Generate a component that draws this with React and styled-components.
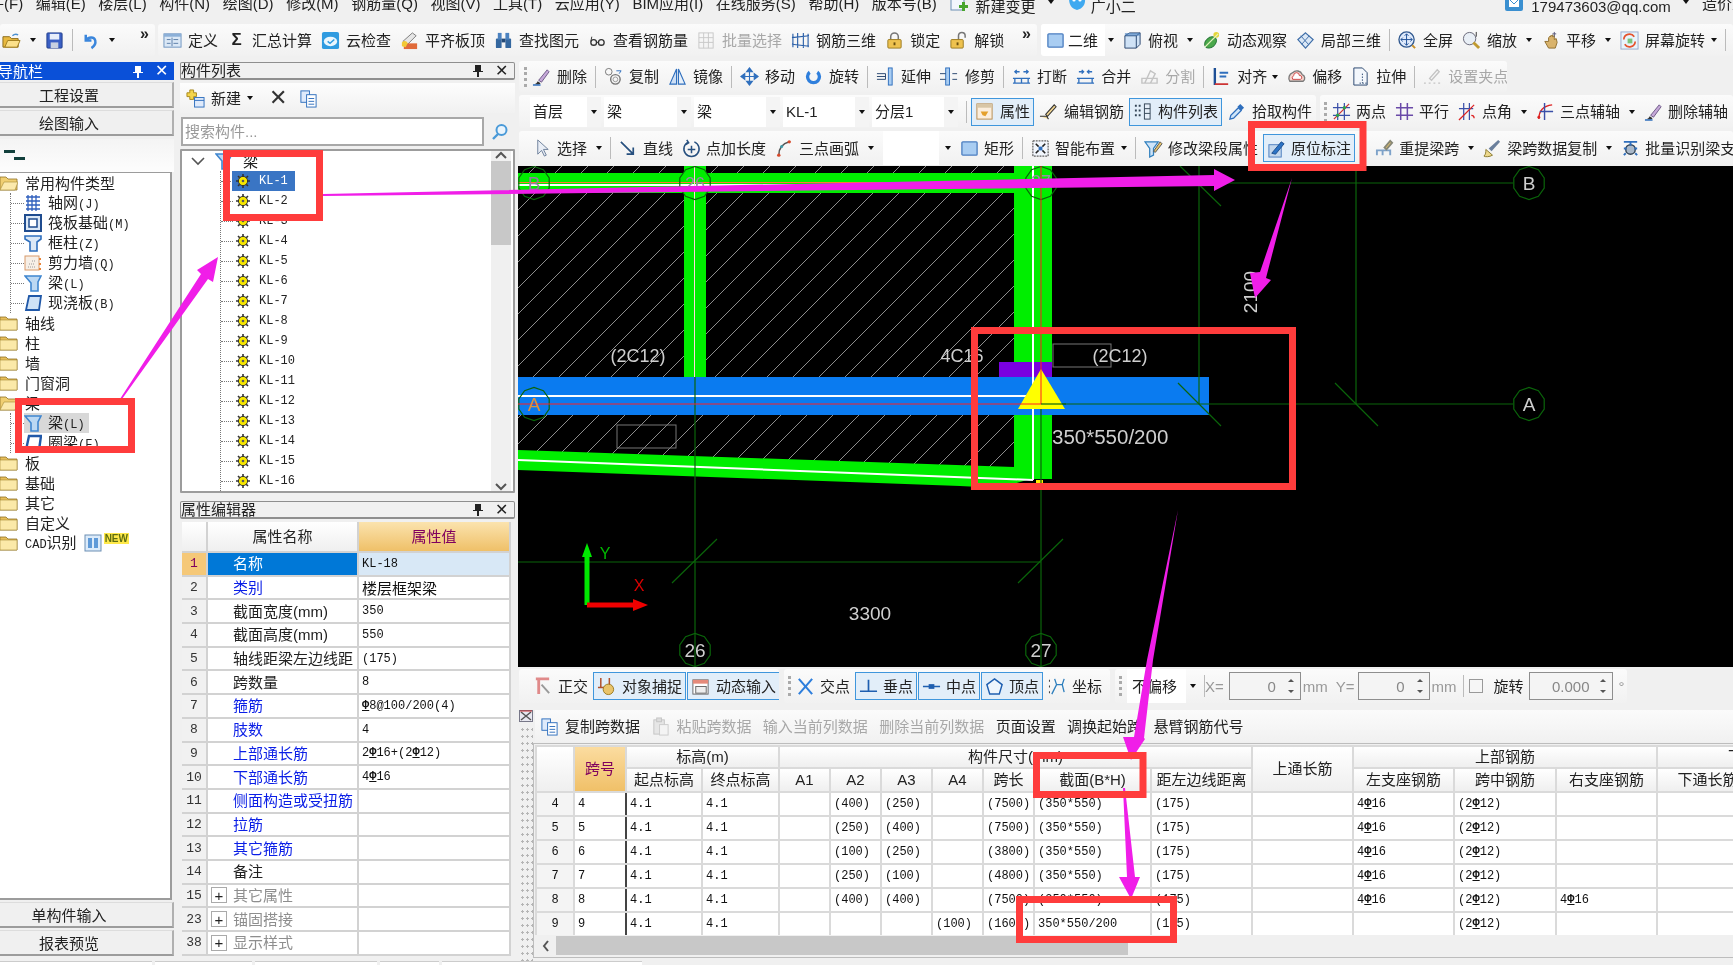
import React from 'react';
import styled, { createGlobalStyle } from 'styled-components';

const UI = `"Liberation Sans","Noto Sans CJK SC",sans-serif`;
const MONO = `"Liberation Mono","Noto Sans CJK SC",monospace`;

const Global = createGlobalStyle`
  html,body{margin:0;padding:0;width:1733px;height:965px;overflow:hidden;background:#f0f0f0;}
  *{box-sizing:border-box;}
`;

const Page = styled.div`
  position:relative;width:1733px;height:965px;overflow:hidden;background:#f0f0f0;
  font:15px/1 ${UI};color:#222;display:flex;flex-direction:column;filter:blur(.3px);
`;
const MenuBar = styled.div`height:22px;flex:none;display:flex;gap:12.6px;align-items:flex-start;margin-left:-26px;white-space:nowrap;`;
const MenuItem = styled.span`line-height:7px;display:inline-flex;align-items:center;gap:${p=>p.$gap||0}px;margin-left:${p=>p.$ml||0}px;`;
const MenuIcon = styled.svg`width:20px;height:20px;flex:none;margin-top:-8px;`;
const MainBar = styled.div`height:32px;flex:none;margin-top:2px;display:flex;`;
const Group = styled.div`
  display:flex;align-items:center;gap:9px;height:100%;white-space:nowrap;flex:${p=>p.$grow?'1':'none'};
  width:${p=>p.$w?p.$w+'px':'auto'};margin-left:${p=>p.$ml||0}px;padding-left:${p=>p.$pl||0}px;
  background:linear-gradient(#fbfbfb,#f1f1f1);border-radius:3px;--ig:${p=>p.$ig||6}px;overflow:hidden;
`;
const More = styled.span`align-self:flex-start;margin:2px 6px 0 auto;font:bold 16px/1 "Liberation Sans",sans-serif;`;
const Body = styled.div`height:900px;flex:none;margin-top:5px;display:flex;`;
const Footer = styled.div`flex:1;display:flex;gap:3px;`;
const FootTab = styled.div`width:${p=>p.$w}px;background:#fff;border-top:1px solid #ccc;`;

/* left navigation */
const Nav = styled.div`width:174px;flex:none;display:flex;flex-direction:column;margin-right:6px;padding-bottom:5px;`;
const TitleBlue = styled.div`
  height:18px;margin-top:1px;background:#0a50d8;color:#fff;display:flex;align-items:center;padding-left:0;font-size:15px;
  justify-content:space-between;overflow:hidden;
`;
const NavTitleText = styled.span`margin-left:-2px;`;
const TitleGray = styled.div`
  height:18px;margin-top:${p=>p.$mt||1}px;background:#f0f0f0;border:1px solid #8e8e8e;border-bottom-width:2px;border-radius:2px;
  display:flex;align-items:center;justify-content:space-between;
`;
const TitleBtns = styled.span`display:inline-flex;align-items:center;gap:12px;margin-right:6px;font-size:14px;`;
const NavBtn = styled.div`
  height:26px;margin-top:2px;flex:none;background:#f0f0f0;border-bottom:2px solid #9c9c9c;border-top:1px solid #ddd;border-right:2px solid #b0b0b0;
  display:flex;align-items:center;justify-content:center;padding:2px 34px 0 0;
`;
const NavHead = styled.div`height:33px;margin-top:3px;flex:none;padding:10px 0 0 4px;background:linear-gradient(#f4f4f4,#fdfdfd);`;
const NavTree = styled.div`
  flex:1;background:#fff;border:2px solid #9c9c9c;border-top-width:1px;border-left:none;width:172px;overflow:hidden;
`;
const FolderRow = styled.div`height:20px;display:flex;align-items:center;gap:7px;`;
const NavChildren = styled.div`margin-left:10px;border-left:1px dotted #777;height:${p=>p.$h}px;`;
const ChildRow = styled.div`height:20px;display:flex;align-items:center;`;
const Connector = styled.span`width:${p=>p.$w||13}px;flex:none;border-top:1px dotted #777;`;
const ChildBody = styled.span`display:inline-flex;align-items:center;gap:6px;height:20px;padding-right:4px;background:${p=>p.$sel?'#d8d8d8':'transparent'};`;
const Latin = styled.span`font:12px ${MONO};`;
const TreeIcon = styled.svg`width:18px;height:18px;flex:none;`;
const NewBadge = styled.span`font:bold 10px "Liberation Sans",sans-serif;background:#ffe94a;color:#5e6d10;margin:-10px 0 0 -5px;padding:0 1px;`;

/* middle column */
const Middle = styled.div`width:335px;flex:none;display:flex;flex-direction:column;margin-right:4px;`;
const ListBar = styled.div`height:30px;margin-top:3px;display:flex;align-items:center;gap:6px;padding-left:6px;background:linear-gradient(#fdfdfd,#f1f1f1);`;
const BigX = styled.span`font-size:22px;margin:0 6px 0 10px;color:#333;`;
const Search = styled.div`height:29px;margin-top:4px;display:flex;`;
const SearchInput = styled.div`
  width:303px;margin-left:1px;background:#fff;border:2px solid #a8a8a8;border-right-width:2px;color:#999;
  display:flex;align-items:center;padding-left:2px;font-size:15px;
`;
const SearchBtn = styled.div`flex:1;display:flex;align-items:center;justify-content:center;`;
const ListTree = styled.div`height:344px;margin-top:3px;background:#fff;border:2px solid #9c9c9c;display:flex;border-radius:1px;`;
const ListBody = styled.div`flex:1;overflow:hidden;`;
const ListRoot = styled.div`height:20px;display:flex;align-items:center;padding-left:9px;gap:10px;`;
const Chevron = styled.svg`width:14px;height:10px;flex:none;`;
const ListItems = styled.div`margin-left:38px;border-left:1px dotted #777;`;
const ListRow = styled.div`height:20px;display:flex;align-items:center;`;
const ListEntry = styled.span`
  display:inline-flex;align-items:center;height:20px;width:63px;padding-left:4px;gap:9px;margin-left:-1px;
  font:12px ${MONO};background:${p=>p.$sel?'#3a75c4':'transparent'};color:${p=>p.$sel?'#fff':'#222'};
`;
const GearIcon = styled.svg`width:14px;height:14px;flex:none;`;
const VScroll = styled.div`width:20px;margin-right:2px;background:#f0f0f0;display:flex;flex-direction:column;align-items:center;justify-content:space-between;`;
const VThumb = styled.div`width:100%;height:84px;background:#c8c8c8;margin-bottom:auto;`;
const PropTable = styled.div`margin:3px 0 0 2px;width:329px;display:flex;flex-direction:column;`;
const PropRow = styled.div`display:grid;grid-template-columns:26px 151px 1fr;height:${p=>p.$h||23.7}px;`;
const PropNum = styled.div`
  display:flex;align-items:center;justify-content:center;font:13px ${MONO};border:solid #d2d2d2;border-width:0 2px 2px 0;
  background:${p=>p.$on?'#f5c878':'#f1f1f1'};color:${p=>p.$on?'#80005e':'#333'};
`;
const PropName = styled.div`
  display:flex;align-items:center;padding-left:${p=>p.$exp?3:25}px;gap:6px;border:solid #d2d2d2;border-width:0 2px 2px 0;white-space:nowrap;
  background:${p=>p.$on?'#0078d7':'#fff'};
  color:${p=>p.$on?'#fff':p.$kind==='blue'?'#0a1ee6':p.$kind==='gray'?'#8e8e8e':'#222'};
`;
const PropVal = styled.div`
  display:flex;align-items:center;padding-left:3px;border:solid #d2d2d2;border-width:0 2px 2px 0;font:12px ${MONO};white-space:nowrap;color:#111;
  background:${p=>p.$on?'#d8e8f6':'#fff'};
`;
const CnVal = styled.span`font:15px ${UI};`;
const Plus = styled.span`width:16px;height:16px;border:1px solid #aaa;display:flex;align-items:center;justify-content:center;background:#fff;color:#222;font-size:15px;flex:none;`;
const HeadCell = styled.div`
  display:flex;align-items:center;justify-content:center;border:solid #d2d2d2;border-width:0 2px 2px 0;
  background:${p=>p.$hot?'linear-gradient(#fbe3ae,#efc068)':'linear-gradient(#fff,#efefef)'};color:${p=>p.$hot?'#80005e':'#222'};
`;

/* right column */
const Right = styled.div`flex:1;min-width:0;display:flex;flex-direction:column;`;
const ToolRow = styled.div`height:${p=>p.$h}px;margin-top:${p=>p.$mt||0}px;flex:none;display:flex;gap:${p=>p.$gap||0}px;`;
const Grip = styled.span`width:3px;height:20px;border-left:3px dotted #aaa;flex:none;margin-right:-4px;`;
const Sep = styled.span`width:1px;height:22px;background:#bbb;flex:none;margin:0 -1px;`;
const ToolItem = styled.span`
  display:inline-flex;align-items:center;flex:none;gap:var(--ig,6px);color:${p=>p.$off?'#a8a8a8':'#222'};
  ${p=>p.$on?`height:28px;padding:0 3px;margin:0 -4px;border:1px solid #3f96dc;background:#e2eef9;`:''}
`;
const IconBox = styled.svg`width:19px;height:19px;flex:none;`;
const Sigma = styled.span`width:19px;text-align:center;font:bold 17px "Liberation Sans",sans-serif;flex:none;`;
const Caret = styled.span`
  width:0;height:0;flex:none;border:3.5px solid transparent;border-top:4px solid #111;border-bottom:none;margin:0 ${p=>p.$m||0}px 0 ${p=>p.$l||0}px;
`;
const Selects = styled.div`display:flex;gap:3px;flex:none;`;
const Select = styled.div`
  width:${p=>p.$w}px;height:30px;background:#fff;display:flex;align-items:center;justify-content:space-between;padding-left:3px;font-size:15px;
`;
const SelectCap = styled.span`width:14px;height:100%;background:#f4f4f4;display:flex;align-items:center;justify-content:center;`;
const White = styled.div`background:#fff;height:100%;display:flex;align-items:center;padding-left:5px;width:${p=>p.$w}px;--ig:3px;flex:none;`;
const Canvas = styled.svg`display:block;flex:none;width:1215px;height:501px;margin:1px 0 0 -1px;background:#000;`;
const SnapBar = styled.div`height:41px;flex:none;padding:2px 0 5px;display:flex;gap:5px;`;
const Fields = styled.div`display:flex;align-items:center;flex:none;margin-left:-8px;`;
const Dim = styled.span`color:#999;font-size:15px;flex:none;margin-left:${p=>p.$ml||0}px;`;
const Spin = styled.div`
  width:${p=>p.$w}px;height:28px;border:1px solid #8e8e8e;background:#f4f4f4;flex:none;color:#888;display:flex;align-items:center;justify-content:flex-end;
  gap:${p=>p.$g}px;padding-right:6px;margin-left:${p=>p.$ml||0}px;
`;
const SpinArrows = styled.span`display:flex;flex-direction:column;gap:8px;`;
const SpinUp = styled.span`width:0;height:0;border:3px solid transparent;border-bottom:3px solid #555;border-top:none;`;
const SpinDn = styled.span`width:0;height:0;border:3px solid transparent;border-top:3px solid #555;border-bottom:none;`;
const FieldSep = styled.span`width:1px;height:22px;background:#bbb;flex:none;margin-left:6px;`;
const Check = styled.span`width:14px;height:14px;border:1px solid #999;background:#f6f6f6;flex:none;margin-left:5px;`;
const FieldLabel = styled.span`margin-left:11px;flex:none;`;
const Lower = styled.div`flex:1;display:flex;margin-top:2px;min-height:0;`;
const GripStrip = styled.div`width:14px;flex:none;display:flex;flex-direction:column;gap:4px;`;
const GripDots = styled.div`flex:1;background:radial-gradient(#b5b5b5 1px,transparent 1.2px) 1px 0/5px 7px;`;
const LowerMain = styled.div`flex:1;min-width:0;display:flex;flex-direction:column;`;
const DataBar = styled.div`height:32px;flex:none;margin-left:2px;display:flex;align-items:center;gap:11.4px;padding-left:5px;white-space:nowrap;background:linear-gradient(#fbfbfb,#f1f1f1);`;
const Frame = styled.div`height:215px;flex:none;margin-top:1px;border:1px solid #bdbdbd;border-right:none;padding:1px 0 0 1px;`;
const TableClip = styled.div`height:190px;overflow:hidden;background:#fff;`;
const Table = styled.table`
  table-layout:fixed;width:1323px;border-collapse:collapse;background:#fff;
`;
const Th = styled.th`
  font:400 15px/15px ${UI};color:${p=>p.$hot?'#80005e':'#222'};border:2px solid #dadada;padding:0 0 2px;text-align:center;overflow:hidden;white-space:nowrap;
  background:${p=>p.$hot?'linear-gradient(#fbdca0,#f0c068)':'linear-gradient(#fff,#efefef)'};
`;
const Td = styled.td`
  font:12px/14px ${MONO};color:#111;padding:0 0 0 ${p=>p.$num?0:3}px;border:2px solid #dadada;white-space:nowrap;overflow:hidden;
  text-align:${p=>p.$num?'center':'left'};background:${p=>p.$num?'#f4f4f4':'#fff'};
  ${p=>p.$dark?'border-right:2px solid #444;':''}
`;
const HeadRow = styled.tr`height:${p=>p.$h}px;`;
const BodyRow = styled.tr`height:24px;`;
const HScroll = styled.div`height:19px;margin-top:1px;display:flex;background:#f0f0f0;`;
const HArrow = styled.span`width:21px;display:flex;align-items:center;justify-content:center;`;
const HThumb = styled.span`width:572px;background:#c8c8c8;`;
const Rebar = styled.span`text-decoration:underline;font-weight:bold;`;
const Overlay = styled.svg`position:absolute;left:0;top:0;width:1733px;height:965px;pointer-events:none;`;
const MiniX = styled.span`font-size:16px;line-height:1;`;

const B='#2f6fbd', L='#a9cdf2', D='#27456e';
const Ic = {
  open:<><path d="M1 6h7l2 2h7v9H1z" fill="#e8b93f" stroke="#8a6a1a"/><path d="M3 17l3-7h13l-3 7z" fill="#fbe08a" stroke="#a07d20"/><path d="M11 5c2-2 4-2 6-1" stroke="#4a90d0" fill="none" strokeWidth="1.5"/></>,
  save:<><rect x="2" y="2" width="16" height="16" rx="1" fill="#3a5fc4" stroke="#24408c"/><rect x="5" y="3" width="10" height="6" fill="#e8eefa"/><rect x="6" y="12" width="8" height="6" fill="#c8d0e0"/></>,
  undo:<path d="M5 4v6h6M5.5 9.5C8 6 14 6 15 10c.7 3-1 6-4 8" fill="none" stroke="#3b86dc" strokeWidth="2.6"/>,
  define:<><rect x="1" y="3" width="18" height="14" fill="#dbe8f6" stroke="#6d93bf"/><rect x="1" y="3" width="18" height="3" fill="#8cb0d8"/><path d="M4 9h4M4 13h4M11 9h5M11 13h5M9.5 7v9" stroke="#5a7da8"/></>,
  cloud:<><rect x="1" y="1" width="18" height="18" rx="2" fill="#2f9be0"/><ellipse cx="10" cy="11" rx="7" ry="5" fill="#eaf6fd"/><path d="M7 11l2.5 2L14 9" fill="none" stroke="#2f9be0" strokeWidth="1.6"/></>,
  level:<><path d="M3 11l10-9 4 3-9 9z" fill="#e6e6e6" stroke="#7a7a7a"/><rect x="4" y="13" width="14" height="6" fill="#e06a3a"/><path d="M2 12c2-2 5-2 6 1l-2 4-4-1z" fill="#f2c935"/></>,
  binoc:<><rect x="2" y="8" width="6" height="10" rx="1" fill="#34679f"/><rect x="12" y="8" width="6" height="10" rx="1" fill="#34679f"/><rect x="4" y="2" width="4" height="7" fill="#4b82c0"/><rect x="12" y="2" width="4" height="7" fill="#4b82c0"/><rect x="8" y="8" width="4" height="4" fill="#244a78"/></>,
  glasses:<><circle cx="6" cy="12" r="3" fill="none" stroke="#333" strokeWidth="1.4"/><circle cx="14" cy="12" r="3" fill="none" stroke="#333" strokeWidth="1.4"/><path d="M9 12h2M3 11l1-5" stroke="#333"/></>,
  batch:<g stroke="#c8c8c8" fill="none"><rect x="2" y="2" width="15" height="16"/><path d="M2 7h15M2 12h15M7 2v16M12 2v16"/></g>,
  rebar3d:<g stroke="#2a5fa8" fill="none" strokeWidth="1.2"><path d="M2 3v14M7 2v16M13 2v16M18 3v14M1 7l18-2M1 14l18 2"/></g>,
  lock:<><path d="M6 9V6a4 4 0 018 0v3" fill="none" stroke="#777" strokeWidth="1.6"/><rect x="3" y="9" width="14" height="9" rx="1" fill="#eec24f" stroke="#9a7a22"/><rect x="9" y="12" width="2" height="3" fill="#6a5010"/></>,
  unlock:<><path d="M10 9V5a3.5 3.5 0 017 0v2" fill="none" stroke="#777" strokeWidth="1.6"/><rect x="2" y="9" width="13" height="9" rx="1" fill="#eec24f" stroke="#9a7a22"/><rect x="8" y="12" width="2" height="3" fill="#6a5010"/></>,
  square:<rect x="2" y="3" width="16" height="14" rx="1" fill={L} stroke="#4d7fc0" strokeWidth="1.4"/>,
  cube:<><path d="M2 5l5-3h11v12l-4 4H2z" fill="#cfe2f6" stroke={D}/><path d="M2 5h12v13M14 5l4-3" fill="none" stroke={D}/><path d="M2 2h16v3H2z" fill="#4b82c0" opacity=".6"/></>,
  orbit:<><ellipse cx="9" cy="12" rx="7" ry="5" transform="rotate(-40 9 12)" fill="#4aa84a" stroke="#2a7a3a"/><circle cx="15" cy="4" r="3" fill="#e5d63a"/><path d="M3 17L17 3" stroke="#e5f2c0" strokeWidth="1.4"/></>,
  local3d:<><path d="M10 2l8 7-8 9-8-9z" fill="#dbe8f6" stroke="#3f6ea8" strokeWidth="1.3"/><path d="M5 5l8 9M14 5l-8 9" stroke="#3f6ea8"/></>,
  full:<><circle cx="9" cy="9" r="8" fill="#dfeafb" stroke="#31598f" strokeWidth="1.4"/><path d="M9 3v12M3 9h12M9 3l-2 2m2-2l2 2M9 15l-2-2m2 2l2-2M3 9l2-2m-2 2l2 2M15 9l-2-2m2 2l-2 2" stroke="#1d4f96" fill="none"/><path d="M15 15l3 3" stroke="#c8902a" strokeWidth="2"/></>,
  zoom:<><circle cx="8" cy="8" r="6.5" fill="#e9eff6" stroke="#667"/><path d="M12 12l6 6" stroke="#c09a30" strokeWidth="3"/><path d="M15 1v5" stroke="#333"/></>,
  pan:<><path d="M4 11l4 7h7l2-6-1-4-2 1V5l-2 1V4l-2 2V5L8 7v4z" fill="#d9b36c" stroke="#8f6f2e"/><path d="M14 1v5M12 3h4" stroke="#557" /></>,
  rotate:<><rect x="1" y="1" width="18" height="18" fill="#e8f3fb" stroke="#9ac"/><path d="M4 9a6 6 0 0111-3" stroke="#e5532d" fill="none" strokeWidth="1.8"/><path d="M16 11a6 6 0 01-11 3" stroke="#e5532d" fill="none" strokeWidth="1.8"/><rect x="8" y="8" width="5" height="5" fill="#7cc47c"/></>,
  brush:<><path d="M1 18c3 0 4-1 5-3l3 2c-1 1-2 2-8 1z" fill="#333"/><path d="M7 14L16 3l2 2-8 11z" fill="#c5a8d8" stroke="#6d5a86"/><path d="M1 19h8" stroke="#2f6fbd" strokeWidth="1.5"/></>,
  rings:<><circle cx="5" cy="5" r="3.5" fill="none" stroke="#777"/><circle cx="12" cy="13" r="5" fill="none" stroke="#777" strokeWidth="1.5"/><circle cx="12" cy="13" r="2.5" fill="none" stroke="#999"/><path d="M13 4h5l-2 3" fill="none" stroke={B}/></>,
  mirror:<><path d="M9 2v16H2z" fill="#cfe0f5" stroke={B} strokeWidth="1.2"/><path d="M11 2v16h7z" fill="#e6eff9" stroke={B} strokeWidth="1.2"/></>,
  move:<path d="M10 1v18M1 10h18M10 1L7 5h6zM10 19l-3-4h6zM1 10l4-3v6zM19 10l-4-3v6z" fill={B} stroke={B} strokeWidth="1.2"/>,
  spin:<path d="M5 4a8 8 0 1010 0l-2 3a4.5 4.5 0 11-6 0z" fill="#2f7fdc"/>,
  extend:<><rect x="13" y="1" width="4" height="18" fill={L} stroke={B}/><path d="M1 10h9M1 7h9v6H1" stroke={D} fill="none"/></>,
  trim:<><rect x="6" y="1" width="4" height="18" fill={L} stroke={B}/><path d="M0 7h6M0 13h6M13 7h5M13 13h5" stroke={D}/></>,
  breakI:<g fill="none" stroke={B} strokeWidth="1.4"><path d="M1 12h18M1 17h18M3 12v5M17 12v5M10 12v5"/><path d="M3 5h5m4 0h5M5 3l-2 2 2 2M15 3l2 2-2 2"/></g>,
  merge:<g fill="none" stroke={B} strokeWidth="1.4"><path d="M1 12h18M1 17h18M3 12v5M17 12v5"/><path d="M3 5h5m4 0h5M6 3l2 2-2 2M14 3l-2 2 2 2"/></g>,
  split:<g fill="none" stroke="#c4c4c4" strokeWidth="1.5"><path d="M2 12h16v5H2zM5 17l6-13 5 3-5 10"/></g>,
  align:<><path d="M3 1v18" stroke="#1d4f96" strokeWidth="2.5"/><path d="M8 6h9M8 10h7" stroke={B} strokeWidth="2"/><path d="M3 18h14" stroke="#c33" strokeWidth="2"/></>,
  offset:<><path d="M3 15a6 6 0 013-9 6 6 0 0110 2 4 4 0 011 7z" fill="#f6d4cc" stroke="#7a7a7a" strokeWidth="1.4"/><path d="M6 13a3 3 0 011-4 3 3 0 016 0 2 2 0 011 4z" fill="#fff" stroke="#c44"/></>,
  stretch:<><path d="M3 1h9l5 5v13H3z" fill="#f3f7fc" stroke={D}/><path d="M12 7v10M9 17h8" stroke={D} strokeDasharray="1.5 1.5"/></>,
  grabPt:<g stroke="#c4c4c4" fill="none" strokeWidth="1.5"><path d="M7 12L15 3l2 2-8 9z"/><path d="M1 17h2M6 17h2M11 17h2M16 17h2"/></g>,
  attr:<><rect x="2" y="2" width="16" height="16" fill="#fbeedd" stroke="#b78b4f"/><rect x="2" y="2" width="16" height="4" fill="#d8c6a6"/><path d="M6 10l8 0-3 5-3-1z" fill="#e4a02c"/></>,
  editBar:<><path d="M1 15h7l2 3M7 13L16 3l2 2-9 10z" fill="#f2d591" stroke="#333" strokeWidth="1.1"/></>,
  listI:<g fill="none" stroke="#345"><path d="M2 4h2M2 9h2M2 14h2M6 4h3M6 9h3M6 14h3" strokeWidth="2" strokeDasharray="2 1"/><rect x="12" y="2" width="6" height="16" fill="#e6eff9"/><path d="M12 7h6M12 12h6"/></g>,
  pick:<><path d="M3 18l1-4 8-8 3 3-8 8z" fill="#cfe4f8" stroke={B} strokeWidth="1.3"/><path d="M11 5l3-3 4 4-3 3z" fill={B}/></>,
  two:<g strokeWidth="1.3"><path d="M6 1v18M13 1v18M1 6h18M1 14h18" stroke="#3a4fa8"/><path d="M2 18L18 2" stroke="#c33"/><circle cx="6" cy="14" r="1.8" fill="#2da04a"/><circle cx="13" cy="6" r="1.8" fill="#2da04a"/></g>,
  para:<path d="M6 1v18M13 1v18M1 6h18M1 14h18" stroke="#6a4aa8" strokeWidth="1.6" fill="none"/>,
  angle:<g strokeWidth="1.3" fill="none"><path d="M6 1v18M12 1v18M1 7h15" stroke="#3a4fa8"/><path d="M1 19L17 3" stroke="#d22"/><path d="M14 14a3 3 0 013 3" stroke="#d22"/></g>,
  arcAux:<g fill="none" strokeWidth="1.5"><path d="M3 18C3 9 8 4 17 3" stroke="#d22"/><path d="M9 1v18M4 10h14" stroke="#3a4fa8"/><circle cx="3" cy="16" r="1.5" fill="#d22" stroke="none"/></g>,
  select:<path d="M5 1v15l4-4 3 6 2-1-3-6h5z" fill="#e9eef6" stroke="#6d7f9a"/>,
  lineI:<path d="M2 3l13 13M15 9v7H8" fill="none" stroke="#27507f" strokeWidth="1.8"/>,
  ptLen:<g fill="none" stroke="#27507f" strokeWidth="1.6"><path d="M7 3a8 8 0 106 0M5 1l2 3-3 2"/><path d="M10 7v8M6 11h8"/></g>,
  arcI:<g fill="none" strokeWidth="1.6"><path d="M4 17C4 10 8 5 15 3" stroke="#555"/><circle cx="4" cy="17" r="1.8" fill="#d6492a" stroke="none"/><circle cx="15" cy="3" r="1.8" fill="#d6492a" stroke="none"/><circle cx="7" cy="8" r="1.6" fill="#3f9aa8" stroke="none"/></g>,
  smart:<><rect x="2" y="2" width="16" height="16" fill="#f2f6fc" stroke="#333" strokeDasharray="2 1"/><path d="M5 5l3 3M15 5l-3 3M5 15l3-3M15 15l-3-3" stroke="#222" strokeWidth="1.6"/><rect x="8" y="8" width="4" height="4" fill={B}/></>,
  funnel:<><path d="M1 3h14l-5 7v7l-4 2v-9z" fill="#cfe4f8" stroke="#2f7fbd" strokeWidth="1.3"/><path d="M10 13l7-10 2 2-7 9z" fill="#e9c46a" stroke="#555"/></>,
  inplace:<><rect x="2" y="6" width="13" height="13" fill="#c3d7ec" stroke="#4d7fc0"/><path d="M5 15L15 3l3 2-9 11z" fill="#2b73c5" stroke="#1c4f8e"/></>,
  reBeam:<g fill="none" stroke="#7ea2c9" strokeWidth="2"><path d="M2 17v-5h6v5M8 17v-5h8v5"/><path d="M10 9l6-7 2 2-6 7z" fill="#e9c46a" stroke="#887"/></g>,
  broom:<><path d="M3 11l7 6c-3 2-8 2-9 1 2-2 2-4 2-7z" fill="#eed98c" stroke="#8a7a30"/><path d="M6 10l3 3 9-10-2-2z" fill="#6a7f9c"/></>,
  batchId:<><circle cx="10" cy="11" r="5" fill="#aab8c8" stroke="#345" strokeWidth="1.5"/><path d="M3 3h14M10 3v4M3 17l2-2M17 17l-2-2M3 10h3M14 10h3" stroke={B} strokeWidth="2"/></>,
  ortho:<><path d="M3 2h14" stroke="#e08a8a" strokeWidth="3"/><path d="M6 2v16" stroke="#e08a8a" strokeWidth="3"/><path d="M9 8l8 9" stroke="#999" strokeWidth="2"/></>,
  obj:<><path d="M4 1v10M1 11h8M13 1v8" stroke="#b0522e" strokeWidth="1.6"/><circle cx="12" cy="13" r="5.5" fill="#e9c46a" stroke="#9c7a1f"/></>,
  dyn:<><rect x="2" y="3" width="16" height="15" fill="#fff" stroke="#666"/><rect x="2" y="3" width="16" height="4" fill="#e58a7a"/><rect x="5" y="10" width="11" height="7" fill="#eee" stroke="#666"/></>,
  crossI:<path d="M3 2l14 16M17 2L3 18" stroke="#2f7fdc" strokeWidth="2.2"/>,
  perp:<path d="M1 15h18M10 3v12" stroke="#1f5fb0" strokeWidth="1.8"/>,
  mid:<><path d="M1 10h18" stroke="#1f5fb0" strokeWidth="1.6"/><rect x="7" y="7.5" width="6" height="5" fill="#1f5fb0"/></>,
  apex:<path d="M10 2l8 6-3 10H5L2 8z" fill="#eef5fc" stroke="#1f5fb0" strokeWidth="1.6"/>,
  coord:<g fill="none" stroke="#2f7fbd" strokeWidth="1.4"><path d="M4 18L9 8h6M15 8l2 8M9 8L7 2M15 8l2-6"/><path d="M1 4h1M1 10h1M1 16h1" stroke="#333" strokeWidth="2"/></g>,
  copy:<><rect x="2" y="2" width="9" height="12" fill="#dfeafb" stroke={B}/><rect x="8" y="6" width="10" height="13" fill="#fff" stroke={B}/><path d="M10 10h6M10 13h6M10 16h6" stroke={B}/></>,
  paste:<><rect x="3" y="3" width="11" height="15" fill="#e6e6e6" stroke="#c4c4c4"/><rect x="6" y="1" width="5" height="4" fill="#ddd" stroke="#c4c4c4"/><rect x="9" y="8" width="9" height="11" fill="#f4f4f4" stroke="#ccc"/></>,
  add:<><path d="M4 1h4v3h3v4H8v3H4V8H1V4h3z" fill="#f5d54a" stroke="#a8881e"/><rect x="9" y="9" width="10" height="10" fill="#dfeafb" stroke={B}/><path d="M9 12h10" stroke={B}/></>,
};
const I = ({n}) => <IconBox viewBox="0 0 20 20">{Ic[n]}</IconBox>;
const Tool = ({n,label,on,off}) => (
  <ToolItem $on={on} $off={off}>{n==='sigma'?<Sigma>Σ</Sigma>:<I n={n}/>}<span>{label}</span></ToolItem>
);
const Gear = () => (
  <GearIcon viewBox="0 0 14 14">
    <g stroke="#333" strokeWidth="1.6"><path d="M7 0v14M0 7h14M2 2l10 10M12 2L2 12"/></g>
    <circle cx="7" cy="7" r="4.6" fill="#f6e600" stroke="#333"/><circle cx="7" cy="7" r="1.3" fill="#555"/>
  </GearIcon>
);
const Folder = ({open}) => (
  <TreeIcon viewBox="0 0 18 18">
    <path d="M0 3h6l2 2h9v11H0z" fill={open?'#f0cf72':'#e6bd5a'} stroke="#8f7226" strokeWidth=".8"/>
    <path d={open?'M0 16l4-8h14l-3 8z':'M0 6h17v10H0z'} fill={open?'#fbe9ac':'#fbe9a8'} stroke="#a58a34" strokeWidth=".6"/>
  </TreeIcon>
);
const NavIcons = {
  grid:<g stroke="#2f5fbd" strokeWidth="1.3"><path d="M2 3h14M2 7h14M2 11h14M2 15h14M4 1v16M8 1v16M12 1v16"/></g>,
  raft:<><rect x="1" y="1" width="16" height="16" fill="#dbe8f6" stroke="#1f4c8f" strokeWidth="2"/><rect x="5" y="5" width="8" height="8" fill="#fff" stroke="#1f4c8f" strokeWidth="1.5"/></>,
  col:<path d="M1 2h16v3l-4 3v9H6V8L1 5z" fill="#dbe8f6" stroke="#2f6fbd" strokeWidth="1.6"/>,
  wall:<><rect x="1" y="2" width="14" height="14" fill="#f7efe6" stroke="#d89a6a"/><path d="M4 13h8M5 10h5M8 7h3" stroke="#999" strokeDasharray="1 1"/><path d="M16 4v2M16 9v2M16 14v2" stroke="#e8853a" strokeWidth="2"/></>,
  beam:<path d="M1 2h16l-3 6v9H7V9z" fill="#bcd8f3" stroke="#3f86d0" strokeWidth="1.6"/>,
  slab:<path d="M5 2h12l-2 14H2z" fill="#cfe2f6" stroke="#2058a8" strokeWidth="1.8"/>,
  ring:<path d="M5 2h12l-2 14H2z" fill="#fff" stroke="#2058a8" strokeWidth="2.4"/>,
  cad:<><rect x="1" y="1" width="16" height="16" fill="#dcebfa" stroke="#6d8fb4"/><rect x="4" y="4" width="4" height="10" fill="#5f9ad8"/><rect x="10" y="4" width="4" height="10" fill="#5f9ad8"/></>,
};
const NI = ({n}) => <TreeIcon viewBox="0 0 18 18">{NavIcons[n]}</TreeIcon>;
const Child = ({n,text,lat,sel}) => (
  <ChildRow><Connector/><ChildBody $sel={sel}><NI n={n}/><span>{text}{lat&&<Latin>{lat}</Latin>}</span></ChildBody></ChildRow>
);
const Pin = ({c='#222'}) => <svg width="10" height="13" viewBox="0 0 10 13"><path d="M2 1h6v6h2v1H6v5H4V8H0V7h2z" fill={c}/></svg>;

const rebar = s => s.split('Φ').flatMap((p,i)=> i? [<Rebar key={i}>Φ</Rebar>,p]:[p]);

const propRows = [
  ['1','名称','KL-18','',true],['2','类别','楼层框架梁','blue',false,true],['3','截面宽度(mm)','350'],['4','截面高度(mm)','550'],
  ['5','轴线距梁左边线距','(175)'],['6','跨数量','8'],['7','箍筋','Φ8@100/200(4)','blue'],['8','肢数','4','blue'],
  ['9','上部通长筋','2Φ16+(2Φ12)','blue'],['10','下部通长筋','4Φ16','blue'],['11','侧面构造或受扭筋','','blue'],['12','拉筋','','blue'],
  ['13','其它箍筋','','blue'],['14','备注',''],['15','其它属性','','gray'],['23','锚固搭接','','gray'],['38','显示样式','','gray'],
];
const colW=[38,52,76,77,51,51,51,51,51,117,101,101,101,102,101,101,101];
const spanRows=[
  ['4','4','4.1','4.1','','(400)','(250)','','(7500)','(350*550)','(175)','','4Φ16','(2Φ12)','','',''],
  ['5','5','4.1','4.1','','(250)','(400)','','(7500)','(350*550)','(175)','','4Φ16','(2Φ12)','','',''],
  ['6','6','4.1','4.1','','(100)','(250)','','(3800)','(350*550)','(175)','','4Φ16','(2Φ12)','','',''],
  ['7','7','4.1','4.1','','(250)','(100)','','(4800)','(350*550)','(175)','','4Φ16','(2Φ12)','','',''],
  ['8','8','4.1','4.1','','(400)','(400)','','(7500)','(350*550)','(175)','','4Φ16','(2Φ12)','4Φ16','',''],
  ['9','9','4.1','4.1','','','','(100)','(1600)','350*550/200','(175)','','','(2Φ12)','','',''],
];

const ring=(cx,cy,rx=16,ry=16.5)=>Array.from({length:10},(_,i)=>{const a=i*Math.PI/5+Math.PI/10;return `${(cx+rx*Math.cos(a)).toFixed(1)},${(cy+ry*Math.sin(a)).toFixed(1)}`}).join(' ');
const AXIS='#0a640a';
const CadLabel=styled.text`font-family:"Liberation Sans",sans-serif;fill:${p=>p.$c||'#cfcfcf'};`;

const CadCanvas=()=>(
  <Canvas viewBox="518 166 1215 501">
    <defs>
      <pattern id="hatch" patternUnits="userSpaceOnUse" width="26" height="26">
        <path d="M-2 28L28 -2M-2 2L2 -2M24 28L28 24" stroke="#8c8c8c" strokeWidth="1"/>
      </pattern>
    </defs>
    <rect x="518" y="166" width="1215" height="501" fill="#000"/>
    <polygon points="518,166 1015,166 1015,470 518,455" fill="url(#hatch)"/>
    <rect x="518" y="173" width="497" height="20" fill="#00ee00"/>
    <rect x="684" y="166" width="22" height="212" fill="#00ee00"/>
    <rect x="1014" y="166" width="38" height="313" fill="#00ee00"/>
    <polygon points="518,450 1014,467 1052,467 1052,479 1030,479 1000,488 960,486 518,470" fill="#00ee00"/>
    <rect x="999" y="362" width="53" height="16" fill="#7a00e0"/>
    <rect x="518" y="377" width="691" height="38" fill="#0a7bf0"/>
    <polyline points="518,460 1033,480" fill="none" stroke="#fff" strokeWidth="2"/>
    <rect x="518" y="184" width="300" height="2" fill="#fff"/>
    <rect x="518" y="182" width="523" height="1" fill="#ff7a30"/>
    <rect x="1032" y="166" width="2" height="314" fill="#fff"/>
    <rect x="694" y="166" width="1" height="211" fill="#ffd8d8"/>
    <rect x="518" y="395" width="522" height="2" fill="#fff"/>
    <rect x="1036" y="480" width="7" height="3" fill="#ffee00"/>
    <g stroke={AXIS} strokeWidth="1.2" fill="none">
      <path d="M695 377V667M1041 404V667M1199 166V404M1356 166V404"/>
      <path d="M1049 404H1513M1199 183H1513M518 562H1041"/>
      <path d="M1178 383L1221 426M1335 383L1378 426M1180 166L1221 206M672 583L717 539M1018 583L1063 539"/>
      <polygon points={ring(534,183)}/><polygon points={ring(534,404)}/><polygon points={ring(695,183)}/><polygon points={ring(1041,183)}/>
      <polygon points={ring(1529,183)}/><polygon points={ring(1529,404)}/><polygon points={ring(695,650)}/><polygon points={ring(1041,650)}/>
    </g>
    <polygon points="1041,369 1018,409 1065,409" fill="#ffff00"/>
    <path d="M1041 166V404" stroke="#ff2020" strokeWidth="1"/>
    <path d="M518 404H1041" stroke="#ff2020" strokeWidth="1"/>
    <path d="M1041 404H1066" stroke={AXIS} strokeWidth="1.2"/>
    <rect x="617" y="425" width="59" height="23" fill="none" stroke="#777"/>
    <rect x="1053" y="344" width="58" height="23" fill="none" stroke="#777"/>
    <CadLabel x="638" y="362" fontSize="18" textAnchor="middle">(2C12)</CadLabel>
    <CadLabel x="962" y="362" fontSize="18" textAnchor="middle">4C16</CadLabel>
    <CadLabel x="1120" y="362" fontSize="18" textAnchor="middle">(2C12)</CadLabel>
    <CadLabel x="1052" y="444" fontSize="20.5">350*550/200</CadLabel>
    <CadLabel x="870" y="620" fontSize="19" textAnchor="middle">3300</CadLabel>
    <CadLabel x="1257" y="292" fontSize="19" textAnchor="middle" transform="rotate(-90 1257 292)">2100</CadLabel>
    <CadLabel x="534" y="190" fontSize="19" textAnchor="middle" $c="#8f7fa0">B</CadLabel>
    <CadLabel x="534" y="411" fontSize="19" textAnchor="middle" $c="#e0913a">A</CadLabel>
    <CadLabel x="695" y="190" fontSize="18" textAnchor="middle" $c="#9a8aa8">26</CadLabel>
    <CadLabel x="1041" y="188" fontSize="18" textAnchor="middle" $c="#9a8aa8">27</CadLabel>
    <CadLabel x="1529" y="190" fontSize="19" textAnchor="middle">B</CadLabel>
    <CadLabel x="1529" y="411" fontSize="19" textAnchor="middle">A</CadLabel>
    <CadLabel x="695" y="657" fontSize="19" textAnchor="middle">26</CadLabel>
    <CadLabel x="1041" y="657" fontSize="19" textAnchor="middle">27</CadLabel>
    <path d="M587 605V553" stroke="#00e800" strokeWidth="5"/><polygon points="587,543 582,557 592,557" fill="#00e800"/>
    <path d="M587 605H636" stroke="#f00000" strokeWidth="5"/><polygon points="648,605 633,599 633,611" fill="#f00000"/>
    <CadLabel x="605" y="559" fontSize="16" textAnchor="middle" $c="#00b800">Y</CadLabel>
    <CadLabel x="639" y="591" fontSize="16" textAnchor="middle" $c="#d80000">X</CadLabel>
  </Canvas>
);

const Annotations=()=>(
  <Overlay viewBox="0 0 1733 965">
    <g fill="#f01ee8">
      <polygon points="323,194 1214,175 1214,169 1235,180 1214,191 1214,186 323,196"/>
      <polygon points="120,399 201,274 197,270 218,257 213,282 208,279 122,399"/>
      <polygon points="1292,178 1260,272 1250,273 1255,298 1271,280 1266,278"/>
      <polygon points="1178,510 1147,660 1134,737 1123,737 1131,760 1145,739 1144,738 1153,660"/>
      <polygon points="1123,788 1127,877 1119,877 1131,899 1140,877 1135,877 1125,788"/>
    </g>
    <g fill="none" stroke="#ff3c3c" strokeWidth="7">
      <rect x="226.5" y="153.5" width="93" height="64"/>
      <rect x="18.5" y="401.5" width="113" height="48"/>
      <rect x="1251.5" y="124.5" width="111.5" height="43"/>
      <rect x="974.5" y="330.5" width="318" height="156"/>
      <rect x="1036.5" y="755.5" width="106.5" height="39"/>
      <rect x="1019.5" y="899.5" width="154" height="40"/>
    </g>
  </Overlay>
);

export default function App(){
  return (
    <Page>
      <Global/>
      <MenuBar>
        {['文件(F)','编辑(E)','楼层(L)','构件(N)','绘图(D)','修改(M)','钢筋量(Q)','视图(V)','工具(T)','云应用(Y)','BIM应用(I)','在线服务(S)','帮助(H)','版本号(B)'].map(t=><MenuItem key={t}>{t}</MenuItem>)}
        <MenuItem $gap={6}>
          <MenuIcon viewBox="0 0 20 20"><rect x="2" y="1" width="13" height="17" fill="#f2f6fc" stroke="#6d8fb4"/><path d="M13 10h3v3h3v3h-3v3h-3v-3h-3v-3h3z" fill="#49a52e"/></MenuIcon>
          新建变更
        </MenuItem>
        <MenuItem><Caret/></MenuItem>
        <MenuItem $gap={4}>
          <MenuIcon viewBox="0 0 20 20"><path d="M3 2c3 3 11 3 14 0 2 6 2 14-7 16C2 16 1 8 3 2z" fill="#3fa9f0"/><circle cx="7" cy="8" r="1.6" fill="#fff"/><circle cx="13" cy="8" r="1.6" fill="#fff"/></MenuIcon>
          广小二
        </MenuItem>
        <MenuItem $ml={356} $gap={7}>
          <MenuIcon viewBox="0 0 20 20"><rect x="1" y="1" width="18" height="18" rx="2" fill="#3a8fd0"/><path d="M5 7h10v8H5z" fill="#fff"/><path d="M5 7l5 5 5-5" fill="none" stroke="#3a8fd0"/></MenuIcon>
          179473603@qq.com
        </MenuItem>
        <MenuItem><Caret/></MenuItem>
        <MenuItem>造价豆</MenuItem>
      </MenuBar>

      <MainBar>
        <Group $w={155} $pl={2}>
          <I n="open"/><Caret/><I n="save"/><Sep/><I n="undo"/><Caret/><More>»</More>
        </Group>
        <Group $w={879} $ml={3} $pl={5}>
          <Tool n="define" label="定义"/><Tool n="sigma" label="汇总计算"/><Tool n="cloud" label="云检查"/><Tool n="level" label="平齐板顶"/>
          <Tool n="binoc" label="查找图元"/><Tool n="glasses" label="查看钢筋量"/><Tool n="batch" label="批量选择" off/><Tool n="rebar3d" label="钢筋三维"/>
          <Tool n="lock" label="锁定"/><Tool n="unlock" label="解锁"/><More>»</More>
        </Group>
        <Group $grow $ml={4}>
          <White $w={64}><Tool n="square" label="二维"/></White><Caret $l={-6}/>
          <Tool n="cube" label="俯视"/><Caret/><Tool n="orbit" label="动态观察"/><Tool n="local3d" label="局部三维"/><Sep/>
          <Tool n="full" label="全屏"/><Tool n="zoom" label="缩放"/><Caret/><Tool n="pan" label="平移"/><Caret/><Tool n="rotate" label="屏幕旋转"/><Caret $l={-3}/><Sep/>
        </Group>
      </MainBar>

      <Body>
        <Nav>
          <TitleBlue><NavTitleText>导航栏</NavTitleText><TitleBtns><Pin c="#fff"/><MiniX>✕</MiniX></TitleBtns></TitleBlue>
          <NavBtn>工程设置</NavBtn>
          <NavBtn>绘图输入</NavBtn>
          <NavHead><svg width="22" height="12" viewBox="0 0 22 12"><rect width="11" height="3" fill="#12403c"/><rect x="10" y="7" width="11" height="3" fill="#12403c"/></svg></NavHead>
          <NavTree>
            <FolderRow><Folder open/><span>常用构件类型</span></FolderRow>
            <NavChildren $h={120}>
              <Child n="grid" text="轴网" lat="(J)"/><Child n="raft" text="筏板基础" lat="(M)"/><Child n="col" text="框柱" lat="(Z)"/>
              <Child n="wall" text="剪力墙" lat="(Q)"/><Child n="beam" text="梁" lat="(L)"/><Child n="slab" text="现浇板" lat="(B)"/>
            </NavChildren>
            {['轴线','柱','墙','门窗洞'].map(t=><FolderRow key={t}><Folder/><span>{t}</span></FolderRow>)}
            <FolderRow><Folder open/><span>梁</span></FolderRow>
            <NavChildren $h={40}>
              <Child n="beam" text="梁" lat="(L)" sel/><Child n="ring" text="圈梁" lat="(F)"/>
            </NavChildren>
            {['板','基础','其它','自定义'].map(t=><FolderRow key={t}><Folder/><span>{t}</span></FolderRow>)}
            <FolderRow><Folder/><span><Latin>CAD</Latin>识别</span><NI n="cad"/><NewBadge>NEW</NewBadge></FolderRow>
          </NavTree>
          <NavBtn>单构件输入</NavBtn>
          <NavBtn>报表预览</NavBtn>
        </Nav>

        <Middle>
          <TitleGray>构件列表<TitleBtns><Pin/><MiniX>✕</MiniX></TitleBtns></TitleGray>
          <ListBar><I n="add"/><span>新建</span><Caret/><BigX>✕</BigX><I n="copy"/></ListBar>
          <Search>
            <SearchInput>搜索构件...</SearchInput>
            <SearchBtn><svg width="18" height="18" viewBox="0 0 18 18"><circle cx="10.5" cy="7" r="5" fill="#eaf4fc" stroke="#4a9ad8" strokeWidth="2"/><path d="M7 11l-5 5" stroke="#4a9ad8" strokeWidth="2.4"/></svg></SearchBtn>
          </Search>
          <ListTree>
            <ListBody>
              <ListRoot>
                <Chevron viewBox="0 0 14 10"><path d="M1 2l6 6 6-6" fill="none" stroke="#555" strokeWidth="1.6"/></Chevron>
                <NI n="beam"/><span>梁</span>
              </ListRoot>
              <ListItems>
                {Array.from({length:16},(_,i)=>(
                  <ListRow key={i}><Connector $w={12}/><ListEntry $sel={i===0}><Gear/><span>KL-{i+1}</span></ListEntry></ListRow>
                ))}
              </ListItems>
            </ListBody>
            <VScroll>
              <Chevron viewBox="0 0 14 10"><path d="M2 7l5-5 5 5" fill="none" stroke="#555" strokeWidth="2"/></Chevron>
              <VThumb/>
              <Chevron viewBox="0 0 14 10"><path d="M2 3l5 5 5-5" fill="none" stroke="#555" strokeWidth="2"/></Chevron>
            </VScroll>
          </ListTree>
          <TitleGray $mt={8}>属性编辑器<TitleBtns><Pin/><MiniX>✕</MiniX></TitleBtns></TitleGray>
          <PropTable>
            <PropRow $h={31}><HeadCell/><HeadCell>属性名称</HeadCell><HeadCell $hot>属性值</HeadCell></PropRow>
            {propRows.map(([num,name,val,kind,on,cn])=>(
              <PropRow key={num}>
                <PropNum $on={on}>{num}</PropNum>
                <PropName $on={on} $kind={kind} $exp={kind==='gray'}>{kind==='gray'&&<Plus>+</Plus>}{name}</PropName>
                <PropVal $on={on}>{cn?<CnVal>{val}</CnVal>:rebar(val)}</PropVal>
              </PropRow>
            ))}
          </PropTable>
        </Middle>

        <Right>
          <ToolRow $h={31}>
            <Group $w={988} $pl={5}>
              <Grip/><Tool n="brush" label="删除"/><Sep/><Tool n="rings" label="复制"/><Tool n="mirror" label="镜像"/><Sep/><Tool n="move" label="移动"/><Tool n="spin" label="旋转"/><Sep/>
              <Tool n="extend" label="延伸"/><Tool n="trim" label="修剪"/><Sep/><Tool n="breakI" label="打断"/><Tool n="merge" label="合并"/><Tool n="split" label="分割" off/><Sep/>
              <Tool n="align" label="对齐"/><Caret $l={-4}/><Tool n="offset" label="偏移"/><Tool n="stretch" label="拉伸"/><Sep/><Tool n="grabPt" label="设置夹点" off/>
            </Group>
          </ToolRow>
          <ToolRow $h={33} $mt={3}>
            <Group $w={797} $pl={11}>
              <Selects>
                {[['首层',71],['梁',87],['梁',86],['KL-1',86],['分层1',86]].map(([t,w],i)=>(
                  <Select key={i} $w={w}><span>{t}</span><SelectCap><Caret/></SelectCap></Select>
                ))}
              </Selects>
              <Sep/>
              <Tool n="attr" label="属性" on/><Tool n="editBar" label="编辑钢筋"/><Tool n="listI" label="构件列表" on/><Tool n="pick" label="拾取构件"/>
            </Group>
            <Group $grow $ml={4} $pl={4} $ig={5}>
              <Grip/><Tool n="two" label="两点"/><Tool n="para" label="平行"/><Tool n="angle" label="点角"/><Caret/><Tool n="arcAux" label="三点辅轴"/><Caret/><Tool n="brush" label="删除辅轴"/>
            </Group>
          </ToolRow>
          <ToolRow $h={34} $mt={3}>
            <Group $grow $pl={14} $ig={5}>
              <Tool n="select" label="选择"/><Caret/><Sep/><Tool n="lineI" label="直线"/><Tool n="ptLen" label="点加长度"/><Tool n="arcI" label="三点画弧"/><Caret/>
              <White $w={56}/><Caret $l={-3}/><Tool n="square" label="矩形"/><Sep/><Tool n="smart" label="智能布置"/><Caret $l={-3}/><Sep/>
              <Tool n="funnel" label="修改梁段属性"/><Tool n="inplace" label="原位标注" on/><Caret/><Tool n="reBeam" label="重提梁跨"/><Caret/><Tool n="broom" label="梁跨数据复制"/><Caret/><Tool n="batchId" label="批量识别梁支"/>
            </Group>
          </ToolRow>
          <CadCanvas/>
          <SnapBar>
            <Group $w={260} $pl={14}>
              <Tool n="ortho" label="正交"/><Tool n="obj" label="对象捕捉" on/><Tool n="dyn" label="动态输入" on/>
            </Group>
            <Group $w={326} $pl={4} $ig={5}>
              <Grip/><Tool n="crossI" label="交点"/><Tool n="perp" label="垂点" on/><Tool n="mid" label="中点" on/><Tool n="apex" label="顶点" on/><Tool n="coord" label="坐标"/>
            </Group>
            <Group $w={512} $pl={4}>
              <Grip/>
              <White $w={59}>不偏移</White><Caret $l={-5}/><Sep/>
              <Fields>
                <Dim>X=</Dim><Spin $w={72} $g={12} $ml={5}>0<SpinArrows><SpinUp/><SpinDn/></SpinArrows></Spin><Dim $ml={2}>mm</Dim>
                <Dim $ml={8}>Y=</Dim><Spin $w={72} $g={12} $ml={3}>0<SpinArrows><SpinUp/><SpinDn/></SpinArrows></Spin><Dim $ml={2}>mm</Dim><FieldSep/>
                <Check/><FieldLabel>旋转</FieldLabel><Spin $w={84} $g={10} $ml={5}>0.000<SpinArrows><SpinUp/><SpinDn/></SpinArrows></Spin><Dim $ml={6}>°</Dim>
              </Fields>
            </Group>
          </SnapBar>
          <Lower>
            <GripStrip>
              <svg width="14" height="12" viewBox="0 0 14 12"><rect x=".5" y=".5" width="13" height="11" fill="#e8e8f0" stroke="#778"/><path d="M2 2l10 8M12 2L2 10" stroke="#555" strokeWidth="1.5"/><path d="M1 1h12" stroke="#c33"/></svg>
              <GripDots/>
            </GripStrip>
            <LowerMain>
              <DataBar>
                <ToolItem><I n="copy"/><span>复制跨数据</span></ToolItem>
                <ToolItem $off><I n="paste"/><span>粘贴跨数据</span></ToolItem>
                <ToolItem $off>输入当前列数据</ToolItem>
                <ToolItem $off>删除当前列数据</ToolItem>
                <ToolItem>页面设置</ToolItem>
                <ToolItem>调换起始跨</ToolItem>
                <ToolItem>悬臂钢筋代号</ToolItem>
              </DataBar>
              <Frame>
                <TableClip>
                  <Table>
                    <colgroup>{colW.map((w,i)=><col key={i} width={w}/>)}</colgroup>
                    <thead>
                      <HeadRow $h={22}>
                        <Th rowSpan={2}/><Th rowSpan={2} $hot>跨号</Th><Th colSpan={2}>标高(m)</Th><Th colSpan={7}>构件尺寸(mm)</Th>
                        <Th rowSpan={2}>上通长筋</Th><Th colSpan={3}>上部钢筋</Th><Th colSpan={2}>下部钢筋</Th>
                      </HeadRow>
                      <HeadRow $h={24}>
                        {['起点标高','终点标高','A1','A2','A3','A4','跨长','截面(B*H)','距左边线距离','左支座钢筋','跨中钢筋','右支座钢筋','下通长筋','侧面钢筋'].map((t,i)=><Th key={i}>{t}</Th>)}
                      </HeadRow>
                    </thead>
                    <tbody>
                      {spanRows.map(r=>(
                        <BodyRow key={r[0]}>
                          {r.map((c,i)=><Td key={i} $num={i===0} $dark={i===1}>{rebar(c)}</Td>)}
                        </BodyRow>
                      ))}
                    </tbody>
                  </Table>
                </TableClip>
                <HScroll>
                  <HArrow><svg width="8" height="12" viewBox="0 0 8 12"><path d="M6 1L2 6l4 5" fill="none" stroke="#555" strokeWidth="2"/></svg></HArrow>
                  <HThumb/>
                </HScroll>
              </Frame>
            </LowerMain>
          </Lower>
        </Right>
      </Body>
      <Footer><FootTab $w={152}/><FootTab $w={97}/><FootTab $w={122}/><FootTab $w={59}/><FootTab $w={200}/></Footer>
      <Annotations/>
    </Page>
  );
}
